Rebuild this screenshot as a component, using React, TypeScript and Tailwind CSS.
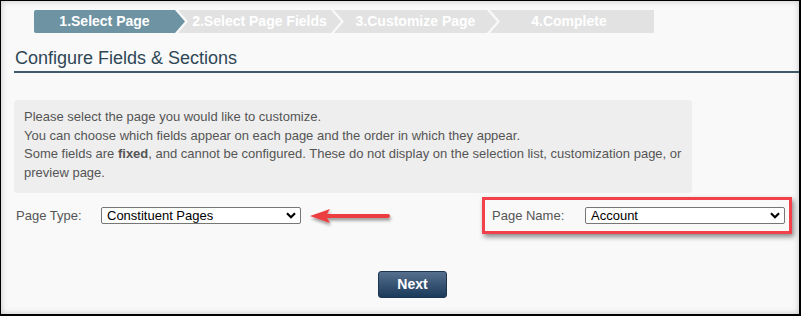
import React from "react";

function Select({ value, width }: { value: string; width: number }) {
  return (
    <div
      className="h-[17px] bg-white border border-[#767676] rounded-[2px] flex items-center pl-[5px] pr-[4px] text-[13px] text-black leading-none"
      style={{ width }}
    >
      <span className="flex-1">{value}</span>
      <svg width="10" height="7" viewBox="0 0 10 7">
        <path d="M1 1.2 L5 5.2 L9 1.2" fill="none" stroke="#000" strokeWidth="2.2" />
      </svg>
    </div>
  );
}

export default function App() {
  const font = { fontFamily: '"Liberation Sans", Arial, sans-serif' };
  return (
    <div
      className="w-[801px] h-[316px] bg-[#f9f9f9] border-l border-t border-r-2 border-b-2 border-black shadow-[inset_0_0_6px_rgba(0,0,0,0.22)] flex flex-col overflow-hidden"
      style={font}
    >
      {/* Steps */}
      <div className="flex pt-[9px] pl-[33px] h-[32px]">
        <div className="h-[23px] w-[151px] bg-[#6e93a2] text-white font-bold text-[14px] flex items-center justify-center pr-[10px] rounded-l-[2px] [clip-path:polygon(0_0,141px_0,151px_50%,141px_100%,0_100%)]">
          1.Select Page
        </div>
        <div className="h-[23px] w-[163px] -ml-[7px] bg-[#e2e2e2] text-white font-bold text-[14px] flex items-center justify-center pl-[10px] pr-[10px] [clip-path:polygon(0_0,153px_0,163px_50%,153px_100%,0_100%,10px_50%)]">
          2.Select Page Fields
        </div>
        <div className="h-[23px] w-[163px] -ml-[7px] bg-[#e2e2e2] text-white font-bold text-[14px] flex items-center justify-center pl-[10px] pr-[10px] [clip-path:polygon(0_0,153px_0,163px_50%,153px_100%,0_100%,10px_50%)]">
          3.Customize Page
        </div>
        <div className="h-[23px] w-[164px] -ml-[7px] bg-[#e2e2e2] text-white font-bold text-[14px] flex items-center justify-center pl-[10px] pr-[16px] [clip-path:polygon(0_0,100%_0,100%_100%,0_100%,10px_50%)]">
          4.Complete
        </div>
      </div>

      {/* Title */}
      <div className="ml-[13px] mt-[14px] pb-[2px] border-b-2 border-[#3e5b6b]">
        <div className="text-[18px] leading-[22px] text-[#2e4756] pl-[1px]">
          Configure Fields &amp; Sections
        </div>
      </div>

      {/* Info box */}
      <div className="ml-[13px] mt-[27px] w-[678px] bg-[#eeeeee] rounded-[4px] pt-[8px] pb-[11px] px-[10px] text-[13px] leading-[18.57px] text-[#555555]">
        <div>Please select the page you would like to customize.</div>
        <div>You can choose which fields appear on each page and the order in which they appear.</div>
        <div>
          Some fields are <b>fixed</b>, and cannot be configured. These do not display on the selection list,
          customization page, or preview page.
        </div>
      </div>

      {/* Selection row */}
      <div className="flex items-center mt-[4px]">
        <div className="ml-[15px] w-[85px] text-[13px] text-[#555555]">Page Type:</div>
        <Select value="Constituent Pages" width={200} />
        <svg width="88" height="20" viewBox="0 0 88 20" className="ml-[7px] overflow-visible">
          <defs>
            <filter id="sh" x="-20%" y="-50%" width="140%" height="220%">
              <feDropShadow dx="1" dy="2.5" stdDeviation="1.5" floodColor="#000" floodOpacity="0.4" />
            </filter>
          </defs>
          <g filter="url(#sh)">
            <line x1="18" y1="10" x2="80" y2="10" stroke="#ec3e3f" strokeWidth="4" strokeLinecap="round" />
            <path d="M2 10 L22 3 L18 10 L22 17 Z" fill="#ec3e3f" />
          </g>
        </svg>
        <div className="ml-auto mr-[7px] h-[37px] w-[310px] border-[3px] border-[#f2414a] shadow-[2px_3px_5px_rgba(0,0,0,0.45)] flex items-center pl-[7px]">
          <div className="w-[93px] text-[13px] text-[#555555]">Page Name:</div>
          <Select value="Account" width={200} />
        </div>
      </div>

      {/* Next */}
      <div className="mt-[37px] ml-[377px]">
        <button className="w-[69px] h-[27px] rounded-[3px] border border-[#1d3551] bg-gradient-to-b from-[#566f8e] to-[#1b3a5a] text-white font-bold text-[14px] flex items-center justify-center">
          Next
        </button>
      </div>
    </div>
  );
}
